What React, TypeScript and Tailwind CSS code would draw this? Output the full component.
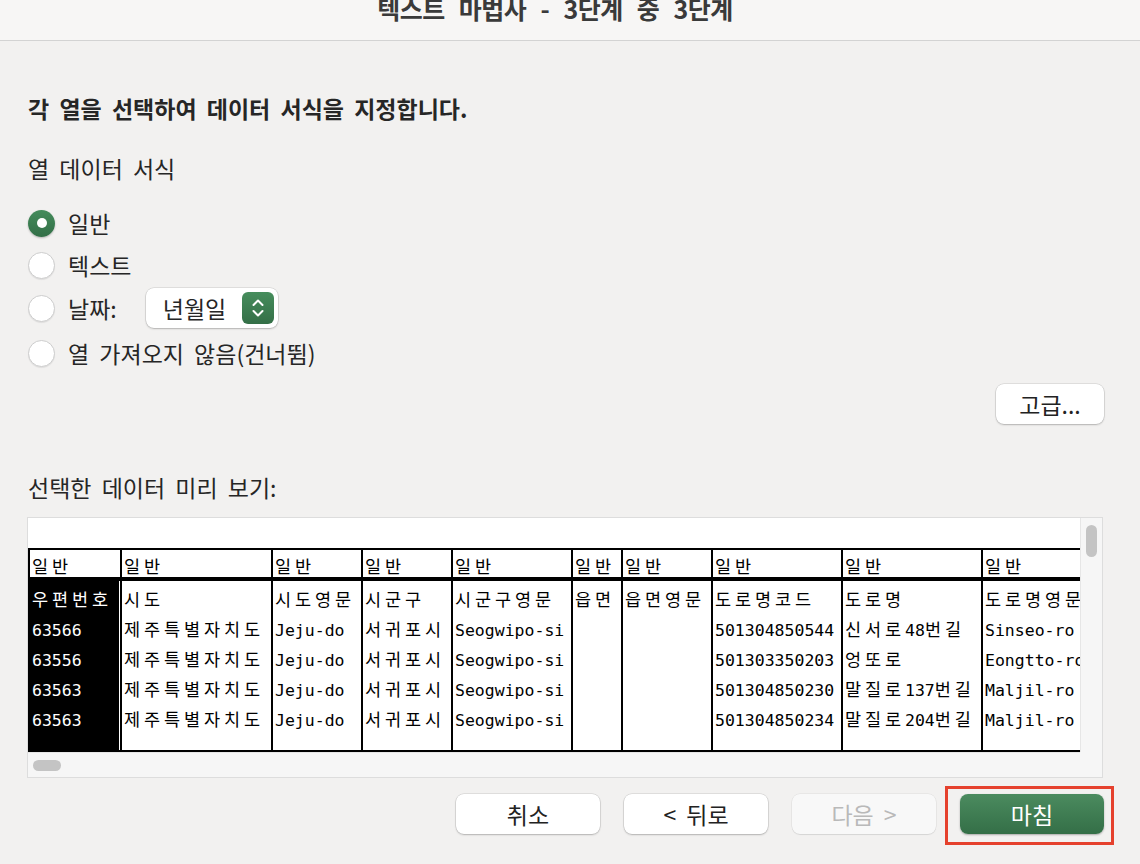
import React from "react";

const ui = "font-['Noto_Sans_CJK_KR','Noto_Sans',sans-serif]";

const columns = [
  { w: "w-[92px]", head: "우편번호", rows: ["63566", "63556", "63563", "63563"], selected: true },
  { w: "w-[151px]", head: "시도", rows: ["제주특별자치도", "제주특별자치도", "제주특별자치도", "제주특별자치도"] },
  { w: "w-[90px]", head: "시도영문", rows: ["Jeju-do", "Jeju-do", "Jeju-do", "Jeju-do"] },
  { w: "w-[90px]", head: "시군구", rows: ["서귀포시", "서귀포시", "서귀포시", "서귀포시"] },
  { w: "w-[120px]", head: "시군구영문", rows: ["Seogwipo-si", "Seogwipo-si", "Seogwipo-si", "Seogwipo-si"] },
  { w: "w-[50px]", head: "읍면", rows: ["", "", "", ""] },
  { w: "w-[90px]", head: "읍면영문", rows: ["", "", "", ""] },
  { w: "w-[130px]", head: "도로명코드", rows: ["501304850544", "501303350203", "501304850230", "501304850234"] },
  { w: "w-[140px]", head: "도로명", rows: ["신서로48번길", "엉또로", "말질로137번길", "말질로204번길"] },
  { w: "w-[99px]", head: "도로명영문", rows: ["Sinseo-ro", "Eongtto-ro", "Maljil-ro", "Maljil-ro"] },
];

// hangul is drawn full-width (20px), everything else half-width
function Mono({ text }: { text: string }) {
  const parts = text.split(/([\uAC00-\uD7A3])/).filter(Boolean);
  return (
    <span className="whitespace-nowrap">
      {parts.map((p, i) =>
        /[\uAC00-\uD7A3]/.test(p) ? (
          <span key={i} className="inline-block w-[20px] font-['Noto_Sans_CJK_KR',sans-serif] text-[17.5px]">
            {p}
          </span>
        ) : (
          <span key={i} className="font-['DejaVu_Sans_Mono',monospace] text-[16.5px]">
            {p}
          </span>
        )
      )}
    </span>
  );
}

function Radio({ checked }: { checked?: boolean }) {
  if (checked) {
    return (
      <span className="flex h-[27px] w-[27px] items-center justify-center rounded-full bg-gradient-to-b from-[#448c5b] to-[#336f47] shadow-[0_1px_2px_rgba(0,0,0,0.25)]">
        <span className="h-[10px] w-[10px] rounded-full bg-white" />
      </span>
    );
  }
  return <span className="h-[27px] w-[27px] rounded-full border border-[#cdcdcd] bg-white shadow-[0_1px_1px_rgba(0,0,0,0.08)]" />;
}

function Btn({ children, kind = "normal" }: { children: React.ReactNode; kind?: "normal" | "disabled" | "primary" }) {
  const cls =
    kind === "primary"
      ? "bg-gradient-to-b from-[#4b8b5f] to-[#346f47] text-white shadow-[0_1px_2px_rgba(0,0,0,0.3)]"
      : kind === "disabled"
      ? "bg-[#f8f8f8] text-[#b9b9b9] shadow-[0_0_0_0.5px_rgba(0,0,0,0.08),0_1px_1px_rgba(0,0,0,0.08)]"
      : "bg-white text-[#222] shadow-[0_0_0_0.5px_rgba(0,0,0,0.15),0_1px_2px_rgba(0,0,0,0.2)]";
  return (
    <div className={`flex h-[40px] w-[144px] items-center justify-center rounded-[8px] ${cls}`}>
      {children}
    </div>
  );
}

export default function App() {
  return (
    <div className={`h-[864px] w-[1140px] overflow-hidden bg-[#f2f1f0] text-[#262626] ${ui}`}>
      {/* title bar */}
      <div className="flex h-[41px] justify-center overflow-hidden border-b border-[#d3d3d3] bg-[#f7f6f5] pr-[30px]">
        <div className="-mt-[7px] text-[25px] font-bold leading-[30px] tracking-[-0.5px] text-[#3a3a3a] [word-spacing:9px]">
          텍스트 마법사 - 3단계 중 3단계
        </div>
      </div>

      <div className="flex flex-col pl-[28px] pr-[36px] text-[23px] [word-spacing:5px]">
        <div className="mt-[53px] h-[28px] font-bold leading-[28px]">각 열을 선택하여 데이터 서식을 지정합니다.</div>
        <div className="mt-[32px] h-[28px] leading-[28px]">열 데이터 서식</div>

        <div className="mt-[20px] flex flex-col">
          <div className="flex h-[42px] items-center gap-[13px]">
            <Radio checked />
            <span>일반</span>
          </div>
          <div className="flex h-[43px] items-center gap-[13px]">
            <Radio />
            <span>텍스트</span>
          </div>
          <div className="flex h-[42px] items-center gap-[13px]">
            <Radio />
            <span>날짜:</span>
            <div className="ml-[16px] flex h-[40px] w-[132px] items-center justify-between rounded-[8px] bg-white pl-[17px] pr-[4px] shadow-[0_0_0_0.5px_rgba(0,0,0,0.15),0_1px_2px_rgba(0,0,0,0.2)]">
              <span>년월일</span>
              <span className="flex h-[32px] w-[32px] items-center justify-center rounded-[6px] bg-gradient-to-b from-[#468d5c] to-[#346f47]">
                <svg width="14" height="22" viewBox="0 0 14 22" fill="none" stroke="white" strokeWidth="2" strokeLinecap="round" strokeLinejoin="round">
                  <path d="M2.5 8 7 3.5 11.5 8" />
                  <path d="M2.5 14 7 18.5 11.5 14" />
                </svg>
              </span>
            </div>
          </div>
          <div className="flex h-[48px] items-center gap-[13px]">
            <Radio />
            <span>열 가져오지 않음(건너뜀)</span>
          </div>
        </div>

        <div className="mt-[7px] flex justify-end">
          <div className="flex h-[40px] w-[108px] items-center justify-center rounded-[8px] bg-white text-[#222] shadow-[0_0_0_0.5px_rgba(0,0,0,0.15),0_1px_2px_rgba(0,0,0,0.2)]">
            고급...
          </div>
        </div>

        <div className="mt-[49px] h-[28px] leading-[28px]">선택한 데이터 미리 보기:</div>

        {/* preview */}
        <div className="-ml-[1px] mt-[16px] grid h-[261px] w-[1076px] grid-cols-[1fr_22px] grid-rows-[1fr_25px] border border-[#dddddd] bg-[#f6f6f6] [word-spacing:0px]">
          <div className="overflow-hidden bg-white pt-[30px]">
            <div className="flex w-max border-y-2 border-l-2 border-black text-black">
              {columns.map((c, i) => (
                <div key={i} className={`flex shrink-0 flex-col border-r-2 border-black ${c.w}`}>
                  <div className="h-[31px] border-b-4 border-black bg-white pl-[2px] leading-[27px]">
                    <Mono text="일반" />
                  </div>
                  <div className={`h-[169px] ${c.selected ? "border-r border-white bg-black text-white" : "bg-white"}`}>
                    {[c.head, ...c.rows].map((t, j) => (
                      <div key={j} className="h-[30px] overflow-hidden pl-[2px] leading-[30px]">
                        <Mono text={t} />
                      </div>
                    ))}
                  </div>
                </div>
              ))}
            </div>
          </div>
          <div className="border-l border-[#e6e6e6] pt-[7px]">
            <div className="mx-auto h-[32px] w-[11px] rounded-full bg-[#c4c4c4]" />
          </div>
          <div className="border-t border-[#e6e6e6] pl-[5px] pt-[7px]">
            <div className="h-[11px] w-[28px] rounded-full bg-[#c4c4c4]" />
          </div>
          <div />
        </div>

        {/* buttons */}
        <div className="mt-[16px] flex justify-end gap-[24px]">
          <Btn>취소</Btn>
          <Btn>&lt; 뒤로</Btn>
          <Btn kind="disabled">다음 &gt;</Btn>
          <div className="relative">
            <Btn kind="primary">마침</Btn>
            <div className="absolute -bottom-[11px] -left-[15px] -right-[10px] -top-[8px] border-[3px] border-[#e5412d]" />
          </div>
        </div>
      </div>
    </div>
  );
}
